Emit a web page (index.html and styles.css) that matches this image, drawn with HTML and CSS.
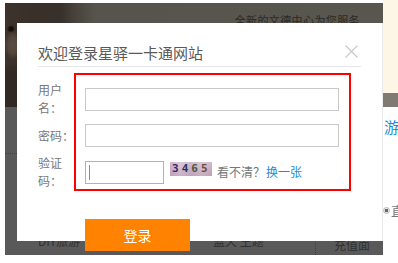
FILE: index.html
```html
<!DOCTYPE html>
<html lang="zh-CN">
<head>
<meta charset="utf-8">
<title>登录</title>
<link rel="stylesheet" href="styles.css">
</head>
<body>
<div class="page">
  <div class="stage">
    <div class="hero">
      <p class="hero-text">全新的文德中心为您服务</p>
    </div>
    <div class="lower">
      <div class="lower-body"></div>
      <div class="lower-mid"></div>
      <div class="lower-foot">
        <span class="foot-a">DIY旅游</span>
        <span class="foot-b">蓝天 主题</span>
        <span class="foot-c">充值面</span>
      </div>
    </div>
    <div class="mask"></div>
    <div class="dialog">
      <div class="dlg-head">
        <h2 class="dlg-title">欢迎登录星驿一卡通网站</h2>
        <svg class="dlg-close" width="13" height="13" viewBox="0 0 13 13">
          <path d="M0.5 0.5 L12.5 12.5 M12.5 0.5 L0.5 12.5" stroke="#c9c9c9" stroke-width="1.1" fill="none"/>
        </svg>
      </div>
      <div class="form">
        <div class="mark"></div>
        <label class="lbl r1">用户名：</label>
        <input class="field r1" type="text">
        <label class="lbl r2">密码：</label>
        <input class="field r2" type="password">
        <label class="lbl r3">验证码：</label>
        <div class="cap-row r3">
          <span class="cap-field"><span class="cap-caret"></span></span>
          <span class="cap-img"><span class="d1">3</span><span class="d2">4</span><span class="d3">6</span><span class="d4">5</span></span>
          <span class="cap-hint">看不清？</span><a class="cap-link" href="#">换一张</a>
        </div>
      </div>
      <button class="btn-login" type="button">登录</button>
    </div>
  </div>
  <aside class="side">
    <div class="side-banner"></div>
    <div class="side-band"></div>
    <div class="side-link">游</div>
    <div class="side-opt"><span class="radio"></span><span class="opt-text">直</span></div>
  </aside>
</div>
</body>
</html>
```

FILE: styles.css
```css
html, body {
  margin: 0;
  padding: 0;
  background: #fff;
  overflow: hidden;
}

.page {
  display: flex;
  align-items: flex-start;
  width: 398px;
  height: 263px;
  font-family: "Noto Sans CJK SC", "Noto Sans", sans-serif;
}

.stage {
  position: relative;
  flex: none;
  width: 378px;
  height: 252px;
  margin: 3px 0 0 5px;
  display: flex;
  flex-direction: column;
  overflow: hidden;
}

.hero {
  flex: none;
  height: 104px;
  display: flex;
  justify-content: flex-end;
  padding: 10px 23px 0 0;
  box-sizing: border-box;
  background:
    radial-gradient(ellipse 9px 15px at 8px 42px, #ffe0c4 0, #f0c8a8 55%, rgba(240,200,168,0) 100%),
    radial-gradient(circle at 6px 26px, #3a2a22 0, #3a2a22 2px, rgba(58,42,34,0) 4px),
    linear-gradient(180deg, rgba(0,0,0,0) 0, rgba(0,0,0,0) 60px, rgba(60,40,30,.25) 70px, rgba(60,40,30,.25) 104px),
    linear-gradient(90deg, #ac927e 0, #a48a78 30px, #a08a7a 55px, #cfc4ae 72px, #f6f0da 90px, #fcf8e2 100%);
}

.hero-text {
  margin: 0;
  font-size: 11px;
  line-height: 14px;
  letter-spacing: 0.4px;
  color: #7a7466;
}

.lower {
  flex: 1;
  display: flex;
  flex-direction: column;
  background: #fff;
}

.lower-body {
  height: 46px;
  border-bottom: 1px dotted #bdbdbd;
}

.lower-mid {
  flex: 1;
}

.lower-foot {
  height: 22px;
  display: flex;
  align-items: flex-start;
  padding-left: 33px;
  font-size: 12px;
  line-height: 16px;
  color: #8a8a8a;
}

.foot-a {
  width: 175px;
}

.foot-b {
  width: 102px;
}

.foot-c {
  height: 22px;
  border-left: 1px dotted #b5b5b5;
  padding-left: 18px;
  padding-top: 4px;
  box-sizing: border-box;
}

.mask {
  position: absolute;
  inset: 0;
  background: rgba(0, 0, 0, 0.65);
}

.dialog {
  position: absolute;
  left: 12px;
  top: 20px;
  width: 366px;
  height: 218px;
  box-sizing: border-box;
  padding: 20px 21px 0 21px;
  background: #fff;
  border-right: 1px solid #ebebeb;
}

.dlg-head {
  display: flex;
  justify-content: space-between;
  align-items: flex-start;
  padding-bottom: 3px;
  border-bottom: 1px solid #e6e6e6;
}

.dlg-title {
  margin: 0;
  font-size: 15px;
  line-height: 20px;
  font-weight: normal;
  color: #595959;
}

.dlg-close {
  display: block;
  margin: 2px 3px 0 0;
}

.form {
  display: grid;
  grid-template-columns: 36px 277px;
  row-gap: 7px;
  margin-top: 14px;
}

.mark {
  grid-column: 2;
  grid-row: 1 / 4;
  margin: -8px 0 -1px 0;
  border: 2px solid #ff0000;
  box-sizing: border-box;
}

.r1 { grid-row: 1; }
.r2 { grid-row: 2; }
.r3 { grid-row: 3; }

.lbl {
  grid-column: 1;
  align-self: center;
  width: 37px;
  font-size: 12px;
  line-height: 18px;
  color: #777;
}

.field {
  grid-column: 2;
  align-self: center;
  width: 254px;
  height: 23px;
  margin: 0 0 0 11px;
  padding: 0 4px;
  box-sizing: border-box;
  border: 1px solid #c9c9c9;
  background: #fff;
  outline: none;
}

.cap-row {
  grid-column: 2;
  align-self: center;
  display: flex;
  align-items: center;
  margin-left: 11px;
  font-size: 12px;
  line-height: 18px;
}

.cap-field {
  display: flex;
  align-items: center;
  width: 79px;
  height: 23px;
  padding-left: 3px;
  box-sizing: border-box;
  border: 1px solid #e6ad45;
  background: #fff;
}

.cap-caret {
  display: block;
  width: 1px;
  height: 15px;
  background: #8a8a8a;
}

.cap-img {
  display: block;
  width: 42px;
  height: 14px;
  margin: 0 0 7px 6px;
  padding-left: 2px;
  box-sizing: border-box;
  background:
    linear-gradient(180deg, rgba(255,255,255,.15), rgba(120,80,110,.12)),
    linear-gradient(90deg, #c9a9c2 0, #d6bfd3 25%, #c6aec6 50%, #d3bccb 75%, #c8acbc 100%);
  font-family: "DejaVu Sans Mono", monospace;
  font-weight: bold;
  font-size: 11px;
  line-height: 14px;
  letter-spacing: 3px;
  white-space: nowrap;
  overflow: hidden;
}

.d1 { color: #34286a; }
.d2 { color: #2c3450; }
.d3 { color: #4b5a3c; }
.d4 { color: #6b4a3a; }

.cap-hint {
  margin-left: 5px;
  color: #777;
}

.cap-link {
  margin-left: 1px;
  color: #1e8bd3;
  text-decoration: none;
}

.btn-login {
  display: block;
  width: 105px;
  height: 32px;
  margin: 29px 0 0 47px;
  padding: 0;
  border: none;
  background: #ff8200;
  color: #fff;
  font-family: "Noto Sans CJK SC", sans-serif;
  font-size: 14px;
  line-height: 32px;
}

.side {
  flex: none;
  width: 15px;
  height: 263px;
  overflow: hidden;
  background: #fff;
}

.side-banner {
  height: 93px;
  background: #fdf5e5;
}

.side-band {
  height: 14px;
  background: #7f7a72;
}

.side-link {
  margin: 11px 0 0 1px;
  font-size: 15px;
  line-height: 18px;
  color: #1a8ad4;
  white-space: nowrap;
}

.side-opt {
  display: flex;
  align-items: center;
  height: 13px;
  margin-top: 68px;
  white-space: nowrap;
}

.radio {
  flex: none;
  width: 7px;
  height: 7px;
  box-sizing: border-box;
  border-radius: 50%;
  border: 1px solid #b8b8b8;
  background: radial-gradient(circle, #666 0, #666 1.5px, #e8e8e8 2px);
}

.opt-text {
  margin-left: 1px;
  font-size: 13px;
  line-height: 13px;
  color: #777;
}
```
